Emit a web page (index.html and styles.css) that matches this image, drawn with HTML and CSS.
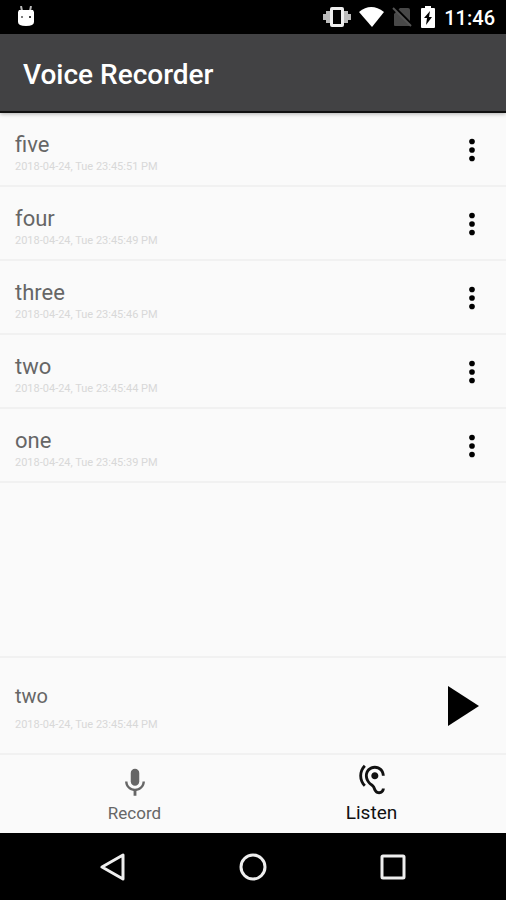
FILE: index.html
```html
<!DOCTYPE html>
<html lang="en">
<head>
    <meta charset="UTF-8">
    <meta name="viewport" content="width=device-width, initial-scale=1.0">
    <title>Voice Recorder</title>
    <link rel="stylesheet" href="styles.css">
</head>
<body>
    <!-- Shared icon -->
    <svg class="sprite" aria-hidden="true">
        <symbol id="more" viewBox="0 0 24 24">
            <circle cx="12" cy="6" r="2"/><circle cx="12" cy="12" r="2"/><circle cx="12" cy="18" r="2"/>
        </symbol>
    </svg>

    <div class="status-bar">
        <svg class="status-app" width="18" height="22" viewBox="0 0 18 22">
            <path d="M4 0l1 5M14 0l-1 5" stroke="#bbb" stroke-width="2"/>
            <path d="M2 4h14l1 2v10q0 4-8 4t-8-4V6z" fill="#fff"/>
            <circle cx="5" cy="11" r="1" fill="#555"/><circle cx="13" cy="11" r="1" fill="#000"/>
        </svg>
        <svg width="28" height="22" viewBox="0 0 28 22">
            <path d="M0 8h3v6H0zM3 5h4v12H3zM21 5h4v12h-4zM25 8h3v6h-3z" fill="#bbb"/>
            <path fill-rule="evenodd" d="M9 1h10q2 0 2 2v16q0 2-2 2H9q-2 0-2-2V3q0-2 2-2zm1 3v14h8V4z" fill="#eee"/>
        </svg>
        <svg width="25" height="22" viewBox="0 0 25 22">
            <path d="M0 6Q12-4 25 6L13 21z" fill="#fff"/>
        </svg>
        <svg width="20" height="22" viewBox="0 0 20 22">
            <path d="M8 2h8q2 0 2 2v16H3q-1 0-1-1V8z" fill="#484848"/>
            <path d="M2 1l18 18" stroke="#000" stroke-width="3"/>
            <path d="M1 2l18 18" stroke="#555" stroke-width="2"/>
        </svg>
        <svg width="16" height="22" viewBox="0 0 16 22">
            <path d="M5 0h6v2h3q1 0 1 1v18q0 1-1 1H2q-1 0-1-1V3q0-1 1-1h3z" fill="#fff"/>
            <path d="M10 5l-6 7h3l-1 7 6-8H9z" fill="#000"/>
        </svg>
        <span class="status-time">11:46</span>
    </div>

    <header class="toolbar">
        <h1>Voice Recorder</h1>
    </header>

    <main class="content">
        <ul class="recordings">
            <li class="recording">
                <div class="info">
                    <div class="name">five</div>
                    <div class="date">2018-04-24, Tue 23:45:51 PM</div>
                </div>
                <button class="icon-button" aria-label="Options for five"><svg class="icon"><use href="#more"/></svg></button>
            </li>
            <li class="recording">
                <div class="info">
                    <div class="name">four</div>
                    <div class="date">2018-04-24, Tue 23:45:49 PM</div>
                </div>
                <button class="icon-button" aria-label="Options for four"><svg class="icon"><use href="#more"/></svg></button>
            </li>
            <li class="recording">
                <div class="info">
                    <div class="name">three</div>
                    <div class="date">2018-04-24, Tue 23:45:46 PM</div>
                </div>
                <button class="icon-button" aria-label="Options for three"><svg class="icon"><use href="#more"/></svg></button>
            </li>
            <li class="recording">
                <div class="info">
                    <div class="name">two</div>
                    <div class="date">2018-04-24, Tue 23:45:44 PM</div>
                </div>
                <button class="icon-button" aria-label="Options for two"><svg class="icon"><use href="#more"/></svg></button>
            </li>
            <li class="recording">
                <div class="info">
                    <div class="name">one</div>
                    <div class="date">2018-04-24, Tue 23:45:39 PM</div>
                </div>
                <button class="icon-button" aria-label="Options for one"><svg class="icon"><use href="#more"/></svg></button>
            </li>
        </ul>
    </main>

    <section class="player">
        <div class="info">
            <div class="name">two</div>
            <div class="date">2018-04-24, Tue 23:45:44 PM</div>
        </div>
        <button class="icon-button" aria-label="Play">
            <svg width="32" height="40" viewBox="0 0 32 40"><path d="M1 0l31 20L1 40z"/></svg>
        </button>
    </section>

    <nav class="tabs">
        <a class="tab" href="#record">
            <svg class="icon" viewBox="0 0 24 24">
                <path d="M12 14c1.660 0 3-1.340 3-3V5c0-1.660-1.340-3-3-3S9 3.340 9 5v6c0 1.660 1.340 3 3 3z"/>
                <path d="M17.300 11c0 3-2.540 5.100-5.300 5.100S6.700 14 6.700 11H5c0 3.410 2.720 6.230 6 6.720V21h2v-3.280c3.280-.480 6-3.300 6-6.720h-1.700z"/>
            </svg>
            <span>Record</span>
        </a>
        <a class="tab active" href="#listen">
            <svg class="icon" viewBox="0 0 24 24">
                <path d="M17 20c-.29 0-.56-.06-.76-.15-.71-.37-1.21-.88-1.710-2.380-.51-1.560-1.470-2.290-2.390-3-.79-.61-1.610-1.240-2.320-2.530C9.290 10.980 9 9.930 9 9c0-2.800 2.200-5 5-5s5 2.200 5 5h2c0-3.930-3.070-7-7-7S7 5.070 7 9c0 1.260.38 2.650 1.070 3.900.91 1.650 1.980 2.480 2.850 3.150.81.62 1.390 1.070 1.710 2.050.6 1.820 1.370 2.840 2.730 3.550.51.23 1.070.35 1.640.35 2.210 0 4-1.790 4-4h-2c0 1.100-.9 2-2 2zM7.640 2.640L6.220 1.220C4.230 3.210 3 5.960 3 9s1.230 5.790 3.220 7.780l1.410-1.410C6.010 13.740 5 11.490 5 9s1.010-4.740 2.640-6.360zM11.500 9c0 1.380 1.120 2.500 2.500 2.500s2.500-1.120 2.500-2.500-1.120-2.500-2.500-2.500-2.500 1.120-2.500 2.500z"/>
            </svg>
            <span>Listen</span>
        </a>
    </nav>

    <div class="system-nav">
        <button aria-label="Back"><svg width="26" height="28" viewBox="0 0 26 28"><path d="M23 2v24L2 14z"/></svg></button>
        <button aria-label="Home"><svg width="28" height="28" viewBox="0 0 28 28"><circle cx="14" cy="14" r="12"/></svg></button>
        <button aria-label="Recent apps"><svg width="28" height="28" viewBox="0 0 28 28"><rect x="3" y="3" width="22" height="22" rx="1"/></svg></button>
    </div>
</body>
</html>
```
FILE: styles.css
```css
* {
    box-sizing: border-box;
}

body {
    display: flex;
    flex-direction: column;
    min-height: 100vh;
    margin: 0;
    background-color: #fafafa;
    font-family: Roboto, sans-serif;
}

svg {
    display: block;
    fill: none;
}

button {
    padding: 0;
    border: none;
    background: none;
    cursor: pointer;
}

.sprite {
    display: none;
}

.icon {
    width: 34px;
    height: 34px;
}

/* Status bar */
.status-bar {
    display: flex;
    align-items: center;
    gap: 8px;
    height: 34px;
    padding: 0 11px 0 17px;
    background-color: #000;
    color: #fff;
}

.status-app {
    margin-right: auto;
}

.status-time {
    padding-top: 2px;
    font-size: 20px;
    font-weight: 500;
}

/* Toolbar */
.toolbar {
    display: flex;
    align-items: center;
    height: 79px;
    padding: 0 23px;
    background-color: #424244;
    border-bottom: 2px solid #111;
    box-shadow: 0 1px 4px rgba(0, 0, 0, 0.3);
    color: #fff;
}

.toolbar h1 {
    margin: 0;
    padding-top: 4px;
    font-size: 28px;
    font-weight: 500;
}

/* Recordings */
.content {
    flex: 1;
}

.recordings {
    margin: 0;
    padding: 0;
    list-style: none;
}

.recording {
    display: flex;
    align-items: center;
    justify-content: space-between;
    height: 74px;
    padding: 2px 17px 0 15px;
    border-bottom: 2px solid #f1f1f1;
}

.recording .info {
    padding-top: 8px;
}

.name {
    color: #666;
    font-size: 22px;
    line-height: 26px;
}

.date {
    color: #d8d8d8;
    font-size: 11px;
    line-height: 18px;
}

.icon-button svg {
    fill: #000;
}

/* Player */
.player {
    display: flex;
    align-items: center;
    justify-content: space-between;
    height: 97px;
    padding: 0 27px 0 15px;
    border-top: 2px solid #f1f1f1;
}

.player .info {
    padding-top: 5px;
}

.player .name {
    font-size: 20px;
    margin-bottom: 7px;
}

/* Bottom tabs */
.tabs {
    display: flex;
    height: 80px;
    padding: 0 16px;
    border-top: 2px solid #f1f1f1;
}

.tab {
    display: flex;
    flex: 1;
    flex-direction: column;
    align-items: center;
    justify-content: flex-end;
    gap: 3px;
    padding-bottom: 10px;
    color: #666;
    font-size: 17px;
    line-height: 20px;
    text-decoration: none;
}

.tab.active {
    gap: 6px;
    color: #111;
    font-size: 19px;
}

.tab .icon {
    fill: currentColor;
}

/* System navigation */
.system-nav {
    display: flex;
    height: 67px;
    padding: 0 43px;
    background-color: #000;
}

.system-nav button {
    display: flex;
    flex: 1;
    align-items: center;
    justify-content: center;
}

.system-nav svg {
    stroke: #eee;
    stroke-width: 3;
    stroke-linejoin: round;
}
```
